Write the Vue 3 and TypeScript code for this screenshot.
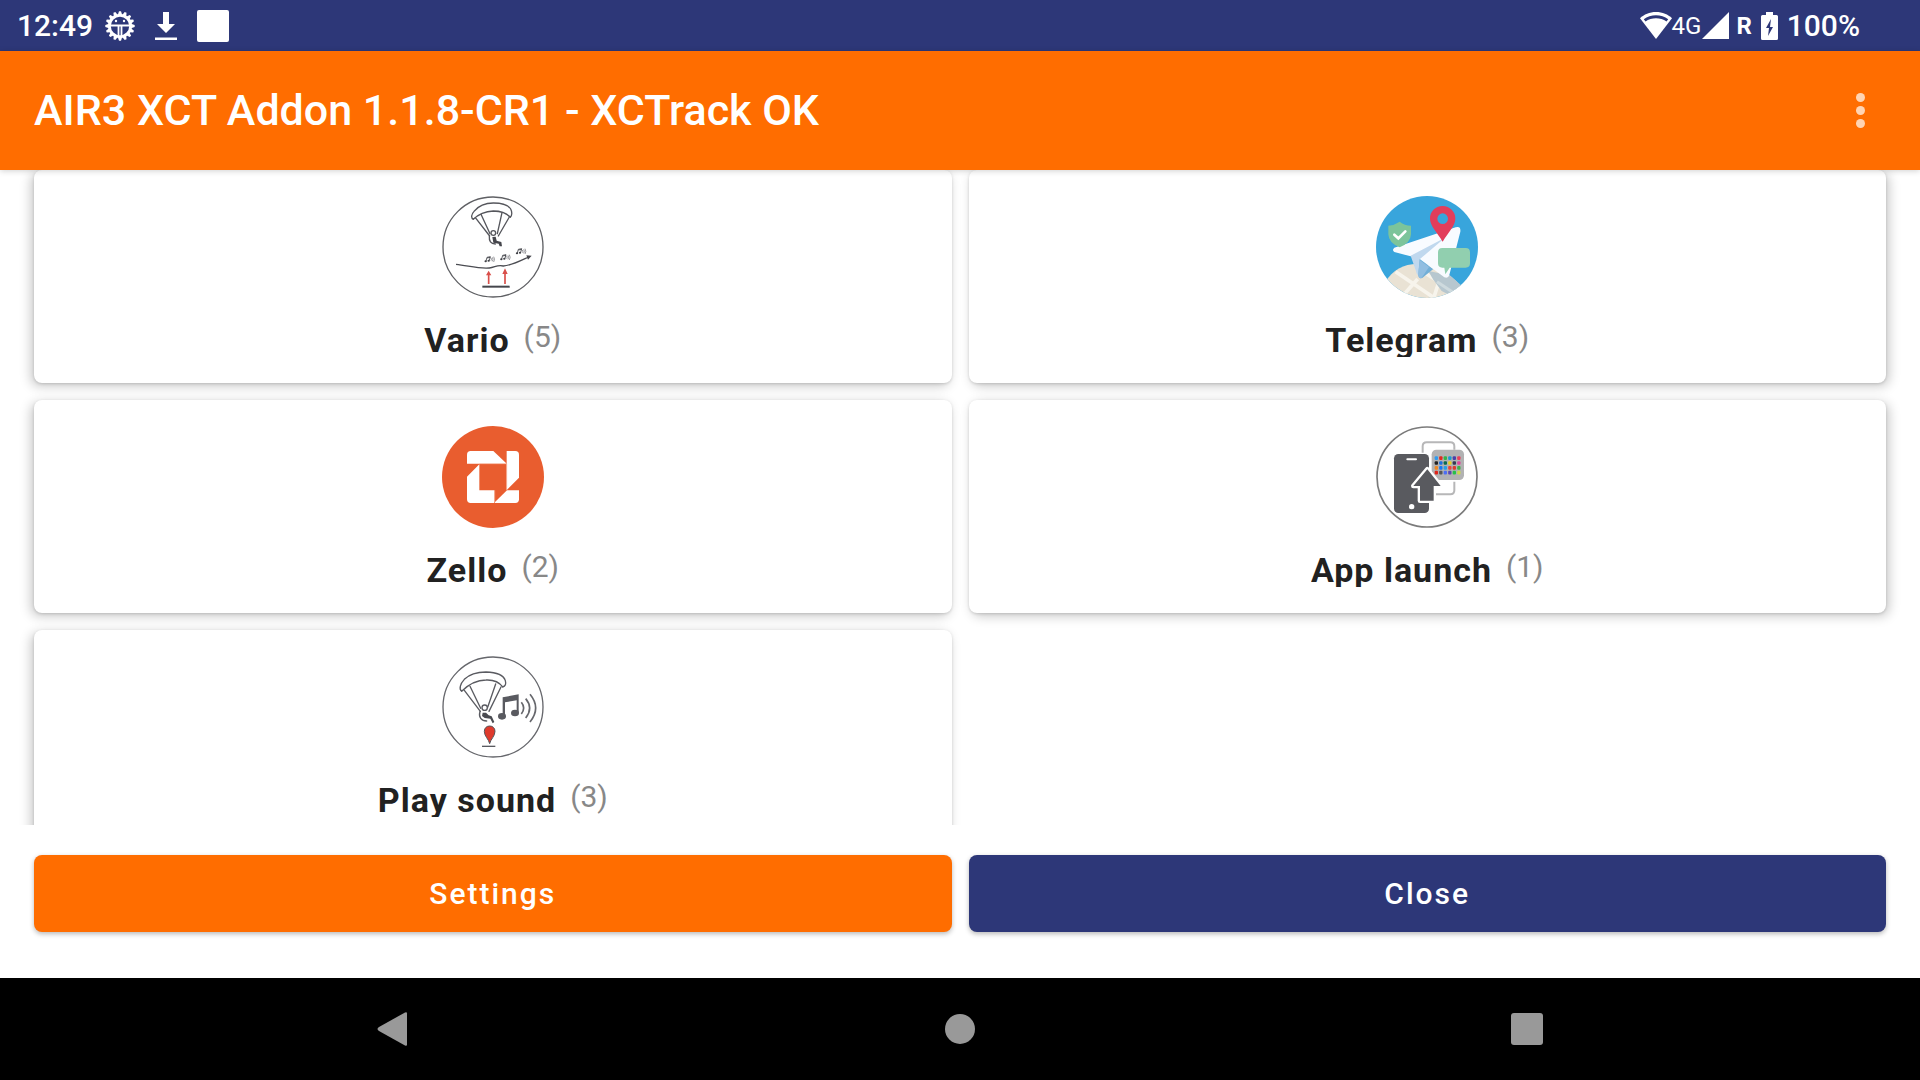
<script setup lang="ts">
interface Category {
  id: string
  label: string
  count: number
}

const categories: Category[] = [
  { id: 'vario', label: 'Vario', count: 5 },
  { id: 'telegram', label: 'Telegram', count: 3 },
  { id: 'zello', label: 'Zello', count: 2 },
  { id: 'launch', label: 'App launch', count: 1 },
  { id: 'sound', label: 'Play sound', count: 3 },
]

const appColors = [
  ['#2f9bf0', '#e02b20', '#35b34a', '#1d9bd1', '#4b3fa8', '#e83f5b'],
  ['#222222', '#1d6fe0', '#0b6b4f', '#e8d022', '#333a55', '#e0479b'],
  ['#f08a24', '#1877f2', '#28a0e8', '#e8453c', '#e03a2f', '#3fae49'],
  ['#e0241b', '#555555', '#4c6ef5', '#5b46b0', '#26c04a', '#c9d94a'],
]

// Evenly spaced teeth around the system notification badge
const teeth = Array.from({ length: 16 }, (_, i) => i * 22.5)
</script>

<template>
  <div class="screen">
    <header class="status">
      <div class="status-left">
        <span class="clock">12:49</span>
        <svg class="gear" viewBox="0 0 30 30" aria-hidden="true">
          <g fill="#fff">
            <path v-for="a in teeth" :key="a" d="M12.800 4 L14 .3 H16 L17.200 4 Z" :transform="`rotate(${a} 15 15)`" />
          </g>
          <circle cx="15" cy="15" r="10.600" fill="none" stroke="#fff" stroke-width="2.800" />
          <path d="M4 14.500H26M13.500 15V26M16.500 15V26" stroke="#fff" stroke-width="1.800" fill="none" />
          <circle cx="11" cy="10" r="1.200" fill="#fff" />
          <circle cx="19" cy="10" r="1.200" fill="#fff" />
        </svg>
        <svg class="download" viewBox="0 0 22 28" aria-hidden="true">
          <path d="M8 0h6v12h6L11 21 2 12h6zM0 25.500h22v2.500H0z" fill="#fff" />
        </svg>
        <span class="block"></span>
      </div>
      <div class="status-right">
        <svg class="wifi" viewBox="0 0 32 27" aria-hidden="true">
          <path d="M16 0C9.500 0 4 2.500 0 6.200L16 27 32 6.200C28 2.500 22.500 0 16 0z" fill="#fff" />
          <path d="M3.800 7.200C10.500 1.800 21.500 1.800 28.200 7.200L26.500 9.500C20.500 5.300 11.500 5.300 5.500 9.500z" fill="#2d3778" />
        </svg>
        <span class="network">4G</span>
        <svg class="signal" viewBox="0 0 27 27" aria-hidden="true"><path d="M27 0V27H0z" fill="#fff" /></svg>
        <span class="roaming">R</span>
        <svg class="battery" viewBox="0 0 17 28" aria-hidden="true">
          <path d="M5 0h7v3h3.500q1.500 0 1.500 1.500V26.500q0 1.500-1.500 1.500h-14Q0 28 0 26.500V4.500Q0 3 1.500 3H5z" fill="#fff" />
          <path d="M10 7 5 16h3l-1 8 5-9H9z" fill="#2d3778" />
        </svg>
        <span class="percent">100%</span>
      </div>
    </header>

    <div class="appbar">
      <h1>AIR3 XCT Addon 1.1.8-CR1 - XCTrack OK</h1>
      <button class="more" type="button" aria-label="More options">
        <i></i><i></i><i></i>
      </button>
    </div>

    <main class="list">
      <div class="grid">
        <button v-for="c in categories" :key="c.id" class="card" type="button">
          <svg v-if="c.id === 'vario'" class="icon" viewBox="36 33 306 306" aria-hidden="true">
            <circle cx="189" cy="186" r="150" fill="#fff" stroke="#5f6064" stroke-width="4" />
            <g fill="none" stroke="#55565c" stroke-width="4" stroke-linejoin="round" stroke-linecap="round">
              <path d="M130 103C122 99 124 88 132 79C146 62 166 54 190 54C214 54 235 60 242 72C247 81 246 93 241 97C230 84 211 78 190 78C166 79 145 88 130 103Z" />
              <path d="M136 98 179 153M153 88 180 146M216 83 202 146M238 96 205 153" />
              <circle cx="190" cy="144" r="7" />
              <path d="M178 154C177 168 182 177 196 177" />
            </g>
            <path d="M187 156 197 155 200 167 214 171 216 184 209 184 206 176 190 173Z" fill="#45464c" />
            <path d="M78 238C115 242 146 252 178 249C194 248 202 238 220 243C246 241 270 228 296 216" fill="none" stroke="#4b4c52" stroke-width="4" />
            <path d="M289 211 305 212 294 224Z" fill="#45464c" />
            <g v-for="(n, i) in [[164, 214], [211, 208], [258, 190]]" :key="i" :transform="`translate(${n[0]} ${n[1]})`">
              <path d="M4 14 7 3 17 1 14 12M7 5 17 3" fill="none" stroke="#3f4046" stroke-width="2.500" />
              <ellipse cx="3" cy="15" rx="3.500" ry="3" fill="#3f4046" />
              <ellipse cx="12" cy="13" rx="3.500" ry="3" fill="#3f4046" />
              <path d="M19 5Q22 9 19 13M23 3Q27 9 23 15M27 1Q32 9 27 17" fill="none" stroke="#66676c" stroke-width="2" />
            </g>
            <path d="M176 297V265M225 297V258" stroke="#d94f4a" stroke-width="5" />
            <path d="M168 271 176 257 184 271ZM217 267 225 250 233 267Z" fill="#d94f4a" />
            <path d="M157 305H239" stroke="#45464c" stroke-width="6" />
          </svg>

          <svg v-else-if="c.id === 'telegram'" class="icon" viewBox="33 33 306 306" aria-hidden="true">
            <defs>
              <clipPath id="disc"><circle cx="186" cy="186" r="153" /></clipPath>
            </defs>
            <g clip-path="url(#disc)">
              <path d="M33 33H339V339H33Z" fill="#38a5dc" />
              <path d="M60 292C83 254 116 237 157 236C210 238 254 263 286 302V339H60Z" fill="#e9e2d4" />
              <path d="M92 260 205 337M158 282 120 325M206 339 222 290 165 255" fill="none" stroke="#f7f4ec" stroke-width="11" />
              <path d="M190 258 254 271 290 302 255 331 230 318 204 283Z" fill="#b7c7cf" />
              <path d="M216 290 268 325" stroke="#cedade" stroke-width="9" />
              <path d="M137 210 163 278Q170 283 178 274L205 252 164 222Z" fill="#72afd7" />
              <path d="M88 188 272 127Q288 122 286 140L253 270Q249 282 238 277L164 222 137 214 88 201Q80 195 88 188Z" fill="#f8fbff" />
              <path d="M137 212 240 158 164 223 160 270Q155 270 153 258Z" fill="#c0d8ee" />
              <path d="M164 225 192 246 169 280Q160 280 159 270Z" fill="#91bee1" />
            </g>
            <path d="M104 110Q119 122 138 122V148Q137 174 104 187Q71 174 70 148V122Q88 121 104 110Z" fill="#7cc49b" />
            <path d="M88 149 100 160 121 139" fill="none" stroke="#fff" stroke-width="8" stroke-linecap="round" />
            <path fill-rule="evenodd" d="M233 63C211 63 194 80 195 102C196 124 216 142 233 170C250 142 270 124 271 102C272 80 254 63 233 63ZM233 85A16 16 0 1 1 233 117A16 16 0 1 1 233 85Z" fill="#e23d5b" />
            <path d="M232 189H302Q315 189 315 202V235Q315 248 302 248H254L241 268 238 248H232Q219 248 219 235V202Q219 189 232 189Z" fill="#91cfaf" />
          </svg>

          <svg v-else-if="c.id === 'zello'" class="icon" viewBox="36 33 306 306" aria-hidden="true">
            <circle cx="189" cy="186" r="153" fill="#e95d2f" />
            <path d="M122 108H190L228 144V146H111V119Q111 108 122 108Z" fill="#fff" />
            <path d="M230 108H256Q267 108 267 119V188L231 224H230Z" fill="#fff" />
            <path d="M148 148V226H193V264H122Q111 264 111 253V185Z" fill="#fff" />
            <path d="M231 226H267V253Q267 264 256 264H195V261Z" fill="#fff" />
            <path d="M148 146H230V226M194 226V262" fill="none" stroke="#f7b7a0" stroke-width="2" />
          </svg>

          <svg v-else-if="c.id === 'launch'" class="icon" viewBox="33 33 306 306" aria-hidden="true">
            <circle cx="186" cy="186" r="150" fill="#fff" stroke="#7b7b7b" stroke-width="5" />
            <path d="M173 113V94Q173 82 185 82H256Q268 82 268 94V104M268 200V226Q268 238 256 238H213" fill="none" stroke="#b7b7b8" stroke-width="6" />
            <rect x="87" y="117" width="105" height="177" rx="13" fill="#595a5f" />
            <path d="M127 133H153" stroke="#fff" stroke-width="6" stroke-linecap="round" />
            <ellipse cx="140" cy="275" rx="8" ry="8" fill="#fff" />
            <rect x="200" y="104" width="97" height="91" rx="14" fill="#b2b2b3" />
            <g v-for="(row, y) in appColors" :key="y">
              <rect v-for="(col, x) in row" :key="x" :x="209 + x * 13.5" :y="124 + y * 14.5" width="10" height="11" rx="3" :fill="col" />
            </g>
            <path d="M187 163 227 213H206V257H165V213H145Z" fill="none" stroke="#fff" stroke-width="14" stroke-linejoin="round" />
            <path d="M187 163 227 213H206V257H165V213H145Z" fill="#595a5f" />
          </svg>

          <svg v-else class="icon" viewBox="36 33 306 306" aria-hidden="true">
            <circle cx="189" cy="186" r="150" fill="#fff" stroke="#66676c" stroke-width="4" />
            <g fill="none" stroke="#5a5b61" stroke-width="4" stroke-linejoin="round" stroke-linecap="round">
              <path d="M95 139C86 132 91 116 103 103C118 88 141 81 168 81C197 82 221 91 226 107C229 118 225 124 218 126C207 110 188 104 168 105C137 105 115 119 95 139Z" />
              <path d="M103 136 151 199M120 124 152 190M197 117 173 187M213 126 177 199" />
              <circle cx="164" cy="188" r="8" />
              <path d="M150 199C145 217 154 228 170 228" stroke-width="4" />
            </g>
            <path d="M158 203 168 203 176 211 185 214 193 231 188 235 181 221 164 219 156 213Z" fill="#4a4b51" />
            <path d="M218 213V157L266 148V203H260V166L225 172V213Z" fill="#595a60" />
            <ellipse cx="216" cy="214" rx="12" ry="10" fill="#595a60" />
            <ellipse cx="255" cy="204" rx="12" ry="10" fill="#595a60" />
            <path d="M274 172Q288 189 274 207M287 161Q311 189 287 219M300 148Q334 189 300 231" fill="none" stroke="#66676c" stroke-width="5" />
            <path d="M179 296C176 282 163 274 163 259C163 249 170 243 179 243C188 243 195 249 195 259C195 274 182 282 179 296Z" fill="#df3a2c" stroke="#55565b" stroke-width="3" />
            <path d="M156 304H196" stroke="#595a60" stroke-width="4" />
          </svg>

          <span class="caption">
            <span class="label">{{ c.label }}</span>
            <span class="count">({{ c.count }})</span>
          </span>
        </button>
      </div>
    </main>

    <div class="actions">
      <button class="action settings" type="button">Settings</button>
      <button class="action close" type="button">Close</button>
    </div>

    <nav class="navbar">
      <button type="button" aria-label="Back">
        <svg viewBox="0 0 34 34" aria-hidden="true"><path d="M31 1.500V32.500Q31 34.500 29 33.500L3 19Q0 17 3 15L29 .5Q31-.5 31 1.500z" fill="#999" /></svg>
      </button>
      <button type="button" aria-label="Home">
        <svg viewBox="0 0 34 34" aria-hidden="true"><circle cx="17" cy="17" r="15" fill="#999" /></svg>
      </button>
      <button type="button" aria-label="Recent apps">
        <svg viewBox="0 0 34 34" aria-hidden="true"><rect x="1" y="1" width="32" height="32" rx="3" fill="#999" /></svg>
      </button>
    </nav>
  </div>
</template>

<style>
body {
  margin: 0;
  background: #fff;
}
</style>

<style scoped>
.screen {
  display: flex;
  flex-direction: column;
  height: 100vh;
  font-family: Roboto, "Liberation Sans", sans-serif;
  background: #fff;
}
button {
  border: 0;
  padding: 0;
  margin: 0;
  background: none;
  font: inherit;
  color: inherit;
}
svg {
  display: block;
  flex: none;
}
.status {
  display: flex;
  justify-content: space-between;
  align-items: center;
  flex: none;
  height: 51px;
  padding: 0 60px 0 17px;
  background: #2d3778;
  color: #fff;
  font-size: 30px;
  font-weight: 500;
  line-height: 36px;
}
.status-left,
.status-right {
  display: flex;
  align-items: center;
}
.clock {
  margin-right: 12px;
}
.gear {
  width: 30px;
  height: 30px;
}
.download {
  width: 22px;
  height: 28px;
  margin: 0 20px;
}
.block {
  width: 32px;
  height: 32px;
  border-radius: 2px;
  background: #fff;
}
.wifi {
  width: 32px;
  height: 27px;
}
.network {
  font-size: 24px;
  font-weight: 400;
}
.signal {
  width: 27px;
  height: 27px;
  margin: 0 7px 0 1px;
}
.roaming {
  font-size: 24px;
  font-weight: 700;
}
.battery {
  width: 17px;
  height: 28px;
  margin: 0 9px;
}
.appbar {
  position: relative;
  z-index: 1;
  display: flex;
  justify-content: space-between;
  align-items: center;
  flex: none;
  height: 119px;
  padding: 0 34px;
  background: #ff6d00;
  box-shadow: 0 1px 6px rgba(0, 0, 0, 0.18);
  color: #fff;
}
h1 {
  margin: 0;
  font-size: 43px;
  font-weight: 500;
  line-height: 51px;
}
.more {
  display: flex;
  flex-direction: column;
  align-items: center;
  gap: 4px;
  width: 51px;
}
.more i {
  width: 9px;
  height: 9px;
  border-radius: 50%;
  background: #ffd4b3;
}
.list {
  flex: 1;
  min-height: 0;
  overflow: hidden;
}
.grid {
  display: grid;
  grid-template-columns: 1fr 1fr;
  gap: 17px;
  padding: 0 34px 17px;
}
.card {
  display: flex;
  flex-direction: column;
  align-items: center;
  padding: 26px;
  border-radius: 8px;
  background: #fff;
  box-shadow: -3px 3px 12px rgba(0, 0, 0, 0.22), 0 1px 3px rgba(0, 0, 0, 0.14);
}
.card:nth-child(even) {
  box-shadow: 3px 3px 12px rgba(0, 0, 0, 0.22), 0 1px 3px rgba(0, 0, 0, 0.14);
}
.icon {
  width: 102px;
  height: 102px;
}
.caption {
  display: flex;
  align-items: flex-start;
  gap: 14px;
  height: 37px;
  margin-top: 22px;
  overflow: hidden;
}
.label {
  font-size: 34px;
  font-weight: 700;
  line-height: 40px;
  letter-spacing: 1px;
  color: #212121;
}
.count {
  font-size: 30px;
  line-height: 33px;
  color: #888;
}
.actions {
  display: grid;
  grid-template-columns: 1fr 1fr;
  gap: 17px;
  flex: none;
  padding: 30px 34px 46px;
}
.action {
  height: 77px;
  border-radius: 8px;
  color: #fff;
  font-size: 30px;
  font-weight: 500;
  letter-spacing: 2px;
  box-shadow: 0 2px 5px rgba(0, 0, 0, 0.28);
}
.settings {
  background: #ff6d00;
}
.close {
  background: #2d3778;
}
.navbar {
  display: flex;
  justify-content: space-between;
  align-items: center;
  flex: none;
  height: 102px;
  padding: 0 376px;
  background: #000;
}
.navbar svg {
  width: 34px;
  height: 34px;
}
</style>
